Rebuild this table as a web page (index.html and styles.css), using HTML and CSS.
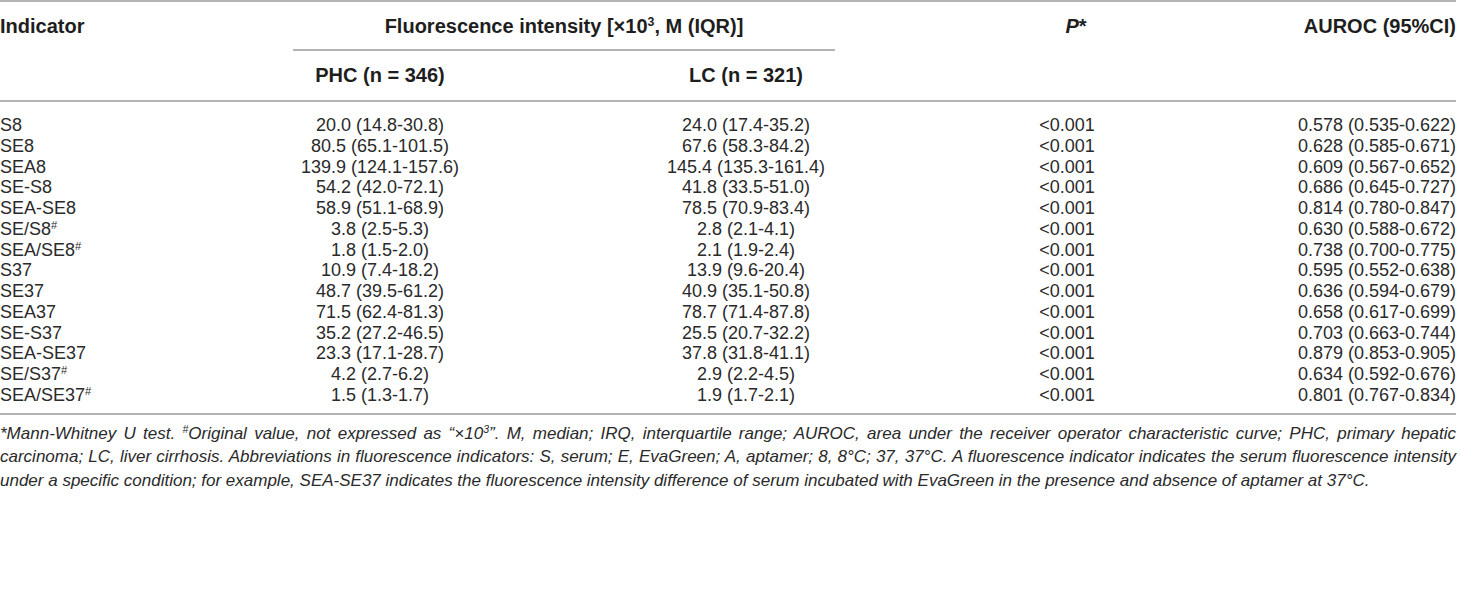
FILE: index.html
```html
<!DOCTYPE html>
<html lang="en">
<head>
  <meta charset="utf-8" />
  <title>Fluorescence indicators</title>
  <link rel="stylesheet" href="styles.css">
</head>
<body>
  <div class="sheet">
    <table class="data">
      <colgroup>
        <col class="c-ind">
        <col class="c-phc">
        <col class="c-lc">
        <col class="c-p">
        <col class="c-au">
      </colgroup>
      <thead>
        <tr class="head-top">
          <th class="left">Indicator</th>
          <th colspan="2"><div class="span-title">Fluorescence intensity [×10<sup>3</sup>, M (IQR)]</div></th>
          <th class="p-head"><i>P</i>*</th>
          <th class="right">AUROC (95%CI)</th>
        </tr>
        <tr class="head-sub">
          <th></th>
          <th>PHC (n = 346)</th>
          <th>LC (n = 321)</th>
          <th></th>
          <th></th>
        </tr>
      </thead>
      <tbody>
        <tr><td class="left">S8</td><td>20.0 (14.8-30.8)</td><td>24.0 (17.4-35.2)</td><td>&lt;0.001</td><td class="right">0.578 (0.535-0.622)</td></tr>
        <tr><td class="left">SE8</td><td>80.5 (65.1-101.5)</td><td>67.6 (58.3-84.2)</td><td>&lt;0.001</td><td class="right">0.628 (0.585-0.671)</td></tr>
        <tr><td class="left">SEA8</td><td>139.9 (124.1-157.6)</td><td>145.4 (135.3-161.4)</td><td>&lt;0.001</td><td class="right">0.609 (0.567-0.652)</td></tr>
        <tr><td class="left">SE-S8</td><td>54.2 (42.0-72.1)</td><td>41.8 (33.5-51.0)</td><td>&lt;0.001</td><td class="right">0.686 (0.645-0.727)</td></tr>
        <tr><td class="left">SEA-SE8</td><td>58.9 (51.1-68.9)</td><td>78.5 (70.9-83.4)</td><td>&lt;0.001</td><td class="right">0.814 (0.780-0.847)</td></tr>
        <tr><td class="left">SE/S8<sup>#</sup></td><td>3.8 (2.5-5.3)</td><td>2.8 (2.1-4.1)</td><td>&lt;0.001</td><td class="right">0.630 (0.588-0.672)</td></tr>
        <tr><td class="left">SEA/SE8<sup>#</sup></td><td>1.8 (1.5-2.0)</td><td>2.1 (1.9-2.4)</td><td>&lt;0.001</td><td class="right">0.738 (0.700-0.775)</td></tr>
        <tr><td class="left">S37</td><td>10.9 (7.4-18.2)</td><td>13.9 (9.6-20.4)</td><td>&lt;0.001</td><td class="right">0.595 (0.552-0.638)</td></tr>
        <tr><td class="left">SE37</td><td>48.7 (39.5-61.2)</td><td>40.9 (35.1-50.8)</td><td>&lt;0.001</td><td class="right">0.636 (0.594-0.679)</td></tr>
        <tr><td class="left">SEA37</td><td>71.5 (62.4-81.3)</td><td>78.7 (71.4-87.8)</td><td>&lt;0.001</td><td class="right">0.658 (0.617-0.699)</td></tr>
        <tr><td class="left">SE-S37</td><td>35.2 (27.2-46.5)</td><td>25.5 (20.7-32.2)</td><td>&lt;0.001</td><td class="right">0.703 (0.663-0.744)</td></tr>
        <tr><td class="left">SEA-SE37</td><td>23.3 (17.1-28.7)</td><td>37.8 (31.8-41.1)</td><td>&lt;0.001</td><td class="right">0.879 (0.853-0.905)</td></tr>
        <tr><td class="left">SE/S37<sup>#</sup></td><td>4.2 (2.7-6.2)</td><td>2.9 (2.2-4.5)</td><td>&lt;0.001</td><td class="right">0.634 (0.592-0.676)</td></tr>
        <tr><td class="left">SEA/SE37<sup>#</sup></td><td>1.5 (1.3-1.7)</td><td>1.9 (1.7-2.1)</td><td>&lt;0.001</td><td class="right">0.801 (0.767-0.834)</td></tr>
      </tbody>
    </table>

    <p class="note">*Mann-Whitney U test. <sup>#</sup>Original value, not expressed as “×10<sup>3</sup>”. M, median; IRQ, interquartile range; AUROC, area under the receiver operator characteristic curve; PHC, primary hepatic carcinoma; LC, liver cirrhosis. Abbreviations in fluorescence indicators: S, serum; E, EvaGreen; A, aptamer; 8, 8°C; 37, 37°C. A fluorescence indicator indicates the serum fluorescence intensity under a specific condition; for example, SEA-SE37 indicates the fluorescence intensity difference of serum incubated with EvaGreen in the presence and absence of aptamer at 37°C.</p>
  </div>
</body>
</html>
```

FILE: styles.css
```css
/* ===== base ===== */
*, *::before, *::after {
  margin: 0;
  padding: 0;
  box-sizing: border-box;
}

body {
  background: #fff;
  color: #222;
  font-family: "Liberation Sans", Arial, sans-serif;
}

.sheet {
  width: 1460px;
  padding: 0 4px 0 0;
}

/* ===== table ===== */
.data {
  width: 100%;
  border-collapse: collapse;
  table-layout: fixed;
  border-top: 2px solid #b4b4b4;
  border-bottom: 2px solid #b4b4b4;
}

.c-ind { width: 293px; }
.c-phc { width: 174px; }
.c-lc  { width: 558px; }
.c-p   { width: 84px; }
.c-au  { width: auto; }

th, td {
  text-align: center;
  white-space: nowrap;
}
.left  { text-align: left; }
.right { text-align: right; }

th {
  font-weight: bold;
  font-size: 20px;
  color: #1e1e1e;
}
.p-head { padding-left: 18px; }

.head-top th {
  height: 48px;
  vertical-align: middle;
}
.head-top .span-title {
  width: 542px;
  height: 49px;
  line-height: 49px;
  border-bottom: 2px solid #b4b4b4;
}
.head-sub th {
  height: 50px;
  border-bottom: 2px solid #b4b4b4;
}

sup {
  font-size: 0.62em;
  vertical-align: 0.55em;
  line-height: 0;
}

td {
  font-size: 18px;
  height: 20.75px;
  line-height: 20.75px;
  color: #2a2a2a;
}
tbody tr:first-child td { padding-top: 13px; height: 33.75px; }
tbody tr:last-child td { padding-bottom: 7px; height: 27.75px; }

/* ===== footnote ===== */
.note {
  font-style: italic;
  font-size: 17px;
  line-height: 23.5px;
  text-align: justify;
  color: #2a2a2a;
  padding-top: 7px;
}
```
